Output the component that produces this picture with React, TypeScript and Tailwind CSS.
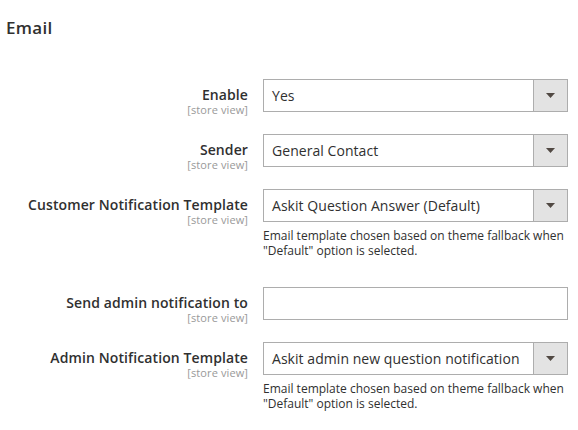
import React from "react";

type Row = {
  label: string;
  kind: "select" | "input";
  value?: string;
  note?: boolean;
};

const rows: Row[] = [
  { label: "Enable", kind: "select", value: "Yes" },
  { label: "Sender", kind: "select", value: "General Contact" },
  {
    label: "Customer Notification Template",
    kind: "select",
    value: "Askit Question Answer (Default)",
    note: true,
  },
  { label: "Send admin notification to", kind: "input" },
  {
    label: "Admin Notification Template",
    kind: "select",
    value: "Askit admin new question notification",
    note: true,
  },
];

function Select({ value }: { value: string }) {
  return (
    <div className="flex h-[33px] w-[305px] border border-[#adadad] bg-white">
      <div className="flex min-w-0 flex-1 items-center overflow-hidden whitespace-nowrap pl-[8px] pr-[8px] text-[14px] leading-[19px] tracking-[0.05px] text-[#303030]">
        {value}
      </div>
      <div className="flex w-[34px] shrink-0 items-center justify-center border-l border-[#adadad] bg-[#e3e3e3]">
        <svg width="9" height="5" viewBox="0 0 9 5">
          <polygon points="0,0 9,0 4.5,5" fill="#514943" />
        </svg>
      </div>
    </div>
  );
}

function Input() {
  return <div className="h-[33px] w-[305px] border border-[#adadad] bg-white" />;
}

export default function App() {
  return (
    <div className="h-[430px] w-[578px] overflow-hidden bg-white font-['Open_Sans',sans-serif] text-[#303030]">
      <h2 className="ml-[6px] pt-[17px] text-[17px] font-semibold leading-[21px] tracking-[0.3px] text-[#303030]">
        Email
      </h2>
      <div className="mt-[41px] flex flex-col gap-[22px]">
        {rows.map((r) => (
          <div key={r.label} className="flex items-start gap-[15px]">
            <div className="flex h-[33px] w-[248px] shrink-0 flex-col items-end overflow-visible pt-[7px] text-right">
              <span className="whitespace-nowrap text-[14px] font-semibold leading-[17px] tracking-[0.1px] text-[#303030]">
                {r.label}
              </span>
              <span className="whitespace-nowrap text-[11px] leading-[13px] tracking-[0.1px] text-[#999999]">
                [store view]
              </span>
            </div>
            <div className="flex w-[305px] flex-col">
              {r.kind === "select" ? <Select value={r.value ?? ""} /> : <Input />}
              {r.note && (
                <div className="mt-[6px] pb-[7px] text-[12px] leading-[15px] text-[#303030]">
                  Email template chosen based on theme fallback when
                  <br />
                  "Default" option is selected.
                </div>
              )}
            </div>
          </div>
        ))}
      </div>
    </div>
  );
}
